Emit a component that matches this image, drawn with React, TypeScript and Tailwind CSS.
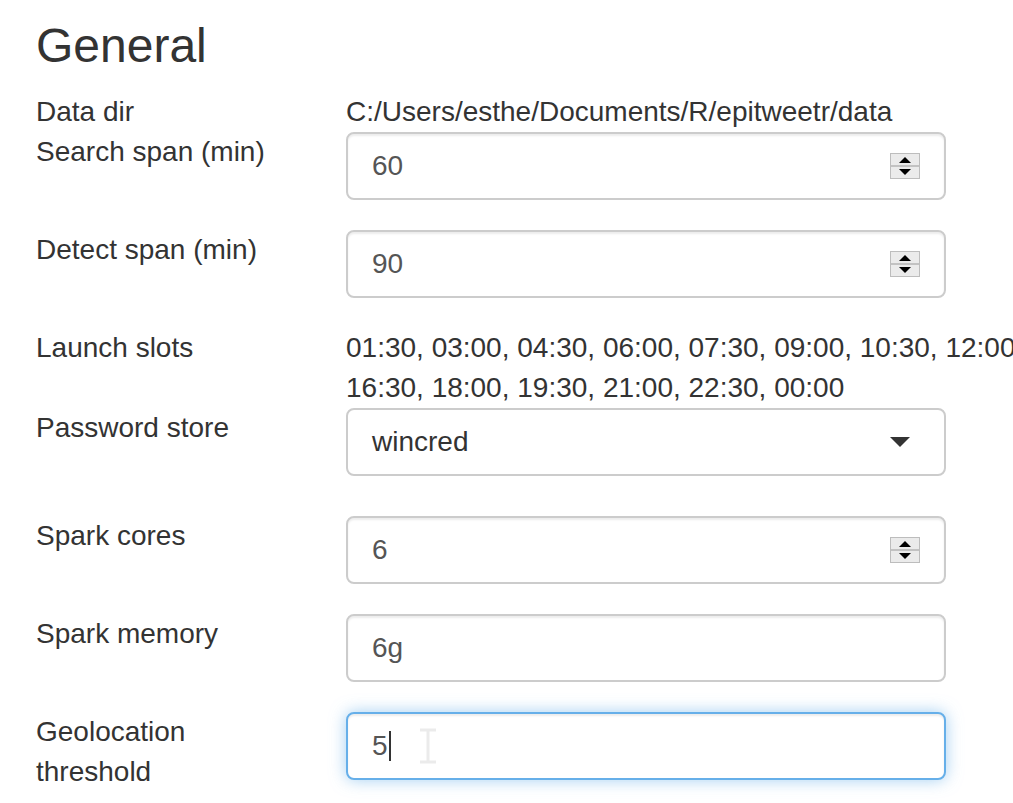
import React from "react";

// Bootstrap/shiny style settings form, rendered at 2x
const font = "font-['Liberation_Sans',Arial,Helvetica,sans-serif]";

function Spinner() {
  return (
    <svg width="30" height="26" viewBox="0 0 30 26" className="shrink-0">
      <rect x="0.5" y="0.5" width="29" height="25" fill="#ebebeb" stroke="#bdbdbd" />
      <line x1="1" y1="13" x2="29" y2="13" stroke="#b5b5b5" strokeWidth="1.5" />
      <polygon points="9,10 21,10 15,4" fill="#000" />
      <polygon points="9,16 21,16 15,22" fill="#000" />
    </svg>
  );
}

function NumberBox({ value }: { value: string }) {
  return (
    <div className="flex h-[68px] w-[600px] items-center justify-between rounded-[8px] border-2 border-[#ccc] bg-white pl-[24px] pr-[24px] shadow-[inset_0_2px_2px_rgba(0,0,0,0.075)]">
      <span className="text-[28px] leading-[40px] text-[#555]">{value}</span>
      <Spinner />
    </div>
  );
}

function TextBox({ value }: { value: string }) {
  return (
    <div className="flex h-[68px] w-[600px] items-center rounded-[8px] border-2 border-[#ccc] bg-white px-[24px] shadow-[inset_0_2px_2px_rgba(0,0,0,0.075)]">
      <span className="text-[28px] leading-[40px] text-[#555]">{value}</span>
    </div>
  );
}

function FocusedBox({ value }: { value: string }) {
  return (
    <div className="flex h-[68px] w-[600px] items-center rounded-[8px] border-2 border-[#66afe9] bg-white px-[24px] shadow-[inset_0_2px_2px_rgba(0,0,0,0.075),0_0_16px_rgba(102,175,233,0.6)]">
      <span className="text-[28px] leading-[40px] text-[#555]">{value}</span>
      <span className="ml-[1px] h-[30px] w-[2px] bg-[#333]" />
      <svg width="20" height="36" viewBox="0 0 20 36" className="ml-[27px]">
        <path d="M2 2h16M2 34h16M10 2v32" stroke="#ebebeb" strokeWidth="3" fill="none" />
      </svg>
    </div>
  );
}

function SelectBox({ value }: { value: string }) {
  return (
    <div className="flex h-[68px] w-[600px] items-center justify-between rounded-[8px] border-2 border-[#ccc] bg-white pl-[24px] pr-[34px]">
      <span className="text-[28px] leading-[40px] text-[#333]">{value}</span>
      <svg width="20" height="10" viewBox="0 0 20 10">
        <polygon points="0,0 20,0 10,10" fill="#333" />
      </svg>
    </div>
  );
}

function Row({ label, children, mb = "" }: { label: string; children: React.ReactNode; mb?: string }) {
  return (
    <div className={`grid grid-cols-[310px_1fr] ${mb}`}>
      <div className="w-[250px] text-[28px] leading-[40px]">{label}</div>
      <div>{children}</div>
    </div>
  );
}

export default function App() {
  return (
    <div className={`h-[803px] w-[1013px] overflow-hidden bg-white text-[#333] ${font}`}>
      <div className="pl-[36px] pt-[20px]">
        <h3 className="mb-[19px] text-[48px] leading-[1.1] font-normal">General</h3>

        <Row label="Data dir">
          <div className="text-[28px] leading-[40px] whitespace-nowrap">C:/Users/esthe/Documents/R/epitweetr/data</div>
        </Row>
        <Row label="Search span (min)" mb="mb-[30px]">
          <NumberBox value="60" />
        </Row>
        <Row label="Detect span (min)" mb="mb-[30px]">
          <NumberBox value="90" />
        </Row>
        <Row label="Launch slots">
          <div className="text-[28px] leading-[40px] whitespace-nowrap">
            <div>01:30, 03:00, 04:30, 06:00, 07:30, 09:00, 10:30, 12:00, 13:30, 15:00,</div>
            <div>16:30, 18:00, 19:30, 21:00, 22:30, 00:00</div>
          </div>
        </Row>
        <Row label="Password store" mb="mb-[40px]">
          <SelectBox value="wincred" />
        </Row>
        <Row label="Spark cores" mb="mb-[30px]">
          <NumberBox value="6" />
        </Row>
        <Row label="Spark memory" mb="mb-[30px]">
          <TextBox value="6g" />
        </Row>
        <Row label="Geolocation threshold">
          <FocusedBox value="5" />
        </Row>
      </div>
    </div>
  );
}
